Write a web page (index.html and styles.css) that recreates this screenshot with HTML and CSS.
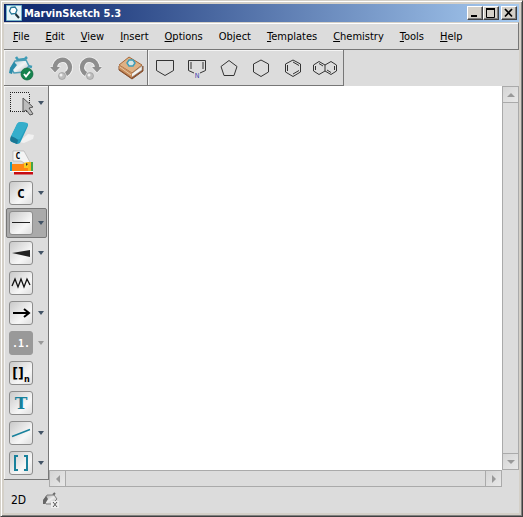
FILE: index.html
```html
<!DOCTYPE html>
<html lang="en">
<head>
    <meta charset="UTF-8">
    <meta name="viewport" content="width=device-width, initial-scale=1.0">
    <title>MarvinSketch 5.3</title>
    <link rel="stylesheet" href="styles.css">
</head>
<body>
    <div class="window">
        <header class="titlebar">
            <svg class="app-icon" width="16" height="16" viewBox="0 0 16 16">
                <rect width="16" height="16" fill="#e8f4f8"/>
                <path d="M0 0H16V16H0Z" fill="none" stroke="#4a9ab8" stroke-width="1.5"/>
                <path d="M5 2.5L9 2L11 5L9.500 8.500L5.500 9L3.500 6Z" fill="#fff" stroke="#287898" stroke-width="1.3"/>
                <path d="M9.500 9L13 13" stroke="#20333d" stroke-width="2"/>
            </svg>
            <h1>MarvinSketch 5.3</h1>
            <div class="window-buttons">
                <button aria-label="Minimize"><svg width="14" height="12"><path d="M3 9H9" stroke="#000" stroke-width="2"/></svg></button>
                <button aria-label="Maximize"><svg width="14" height="12"><path d="M2.500 2V10.500H10.500V2" fill="none" stroke="#000"/><path d="M2 2H11" stroke="#000" stroke-width="2"/></svg></button>
                <button class="close" aria-label="Close"><svg width="14" height="12"><path d="M3 2L10 9.500M10 2L3 9.500" stroke="#000" stroke-width="1.700"/></svg></button>
            </div>
        </header>

        <nav class="menubar">
            <button><u>F</u>ile</button>
            <button><u>E</u>dit</button>
            <button><u>V</u>iew</button>
            <button><u>I</u>nsert</button>
            <button><u>O</u>ptions</button>
            <button>Object</button>
            <button><u>T</u>emplates</button>
            <button><u>C</u>hemistry</button>
            <button><u>T</u>ools</button>
            <button><u>H</u>elp</button>
        </nav>

        <div class="toolbars">
            <div class="toolbar general">
                <button aria-label="Check structure">
                    <svg width="26" height="26" viewBox="0 0 26 26">
                        <defs>
                            <linearGradient id="steel" x2="1" y2="1">
                                <stop stop-color="#a9c4cd"/>
                                <stop offset=".5" stop-color="#f2f4f5"/>
                                <stop offset="1" stop-color="#a3b0b6"/>
                            </linearGradient>
                        </defs>
                        <path d="M8 2L10 5L17 4L19 2M20 11L24 12" fill="none" stroke="#3f9cb6" stroke-width="2.500"/>
                        <path d="M7 6L18 5L21 11L16 17L6 18L3 13Z" fill="url(#steel)" stroke="#4f9fb7" stroke-width="1.500"/>
                        <path d="M6 7L9 10L5 15L4 19L1 18L2 13Z" fill="#2b8dab"/>
                        <circle cx="19" cy="19" r="6" fill="#16834e" stroke="#08643a" stroke-width=".7"/>
                        <path d="M16 19L18 21.500L22 16.500" fill="none" stroke="#fff" stroke-width="2"/>
                    </svg>
                </button>
                <button class="undo" aria-label="Undo">
                    <svg width="24" height="26" viewBox="0 0 24 26">
                        <g id="turn" fill="none">
                            <path d="M5 12A7.500 7.500 0 1 1 16 19" stroke="#f4f4f4" stroke-width="6"/>
                            <path d="M-1 11.500H11L5 18.500Z" fill="#f4f4f4"/>
                            <path d="M5 13A7.500 7.500 0 1 1 16 19" stroke="#8e8e8e" stroke-width="4.500"/>
                            <path d="M0 12H10L5 17.500Z" fill="#8e8e8e"/>
                        </g>
                        <circle cx="12" cy="21" r="3.500" fill="#bdbdbd" stroke="#929292" stroke-width=".6"/>
                        <circle cx="11" cy="20" r="1.500" fill="#efefef"/>
                    </svg>
                </button>
                <button class="redo" aria-label="Redo">
                    <svg width="24" height="26" viewBox="0 0 24 26">
                        <use href="#turn" transform="matrix(-1 0 0 1 24 0)"/>
                        <circle cx="12" cy="21" r="3.500" fill="#bdbdbd" stroke="#929292" stroke-width=".6"/>
                        <circle cx="11" cy="20" r="1.500" fill="#efefef"/>
                    </svg>
                </button>
                <button class="library" aria-label="Template library">
                    <svg width="26" height="26" viewBox="0 0 26 26">
                        <path d="M1 11L13 20L25 11V16L14 24L1 15Z" fill="#8f4e28" stroke="#85502e"/>
                        <path d="M13 19L24 11V15L14 22Z" fill="#f4f2ee" stroke="#9a9a9a" stroke-width=".6"/>
                        <path d="M11 2L24 10L14 18L1 10Z" fill="#dfb184" stroke="#a5683a"/>
                        <path d="M1 10L14 18V23L1 14Z" fill="#c98f5e"/>
                        <path d="M2 12L13 20" stroke="#e8c8a4"/>
                        <path d="M11 5L15 5L17 8L15 11L11 11L9 8Z" fill="#d8e6e4" stroke="#3f9db8" stroke-width="1.500"/>
                    </svg>
                </button>
            </div>
            <div class="toolbar templates">
                <button aria-label="Cyclopentane, point down">
                    <svg width="26" height="26"><path class="bond" d="M4.500 5.500H21.500V15.500L13 20.500L4.500 15.500Z"/></svg>
                </button>
                <button aria-label="Pyrrole">
                    <svg width="26" height="26">
                        <path class="bond" d="M10 18L4.500 15.500V5.500H21.500V15.500L16 18M7 7V14M19 7V14"/>
                        <text x="13" y="23" class="nitrogen">N</text>
                    </svg>
                </button>
                <button aria-label="Cyclopentane">
                    <svg width="26" height="26"><path class="bond" d="M13 5.500L21 11.500L18 20.500H8L5 11.500Z"/></svg>
                </button>
                <button aria-label="Cyclohexane">
                    <svg width="26" height="26"><path class="bond" d="M13 5L20.500 9V17L13 21.500L5.500 17V9Z"/></svg>
                </button>
                <button aria-label="Benzene">
                    <svg width="26" height="26"><path class="bond" d="M13 5L20.500 9V17L13 21.500L5.500 17V9ZM7.500 10V16M13 7L19 10.500M13 19L19 15.500"/></svg>
                </button>
                <button aria-label="Naphthalene">
                    <svg width="26" height="26"><path class="bond" d="M7 6.500L13 10V16L7 19.500L1.500 16V10ZM13 10L19 6.500L24.500 10V16L19 19.500L13 16M3.500 11V15M7 8.500L11 11M22.500 11V15M19 17.500L15 15"/></svg>
                </button>
            </div>
        </div>

        <main class="workspace">
            <aside class="tools">
                <button class="tool menu" aria-label="Select">
                    <svg width="26" height="26" viewBox="0 0 26 26">
                        <path d="M1.500 2.500H20.500V21.500H1.500Z" fill="#e2e2e2"/>
                        <path d="M1 2.500H21M1 21.500H21M1.500 4V21M20.500 4V21" stroke="#222" stroke-dasharray="1 1"/>
                        <path d="M14 8L24 17L20 18L24 24L21 25L17 20L14 22Z" fill="#bcbcbc" stroke="#555"/>
                    </svg>
                </button>
                <button class="tool" aria-label="Erase">
                    <svg width="26" height="26" viewBox="0 0 26 26">
                        <path d="M10 22L19 14L25 15L24 19L15 23Z" fill="#f1f1f1"/>
                        <path d="M8 4Q9 2 12 2L18 3Q20 4 18 8L12 21Q11 24 8 24L3 22Q0 21 2 17Z" fill="#239dbd"/>
                        <path d="M8 4Q9 2 12 2L18 3Q19 4 18 6L11 19Q9 20 6 18L2 16Z" fill="#35aecb"/>
                        <path d="M2 16Q7 18 9 20L8 24L3 22Q0 21 2 16Z" fill="#1b7794"/>
                    </svg>
                </button>
                <button class="tool" aria-label="Clean structure">
                    <svg width="26" height="26" viewBox="0 0 26 26">
                        <path d="M4 1H15L21 12L17 14L12 11H4Z" fill="#f4f4f4" stroke="#aaa" stroke-width=".6"/>
                        <text x="9" y="9" class="card-letter">C</text>
                        <path d="M1 12H3V21H1Z" fill="#159dc4"/>
                        <path d="M3 14H13L19 12V21H3Z" fill="#ff8614"/>
                        <path d="M15 13L19 12V18H15Z" fill="#f8ca20"/>
                        <path d="M19 12H22V21H19Z" fill="#ffb61c"/>
                        <path d="M22 12H24V21H22Z" fill="#43a548"/>
                        <path d="M17 13L19 14L17 16Z" fill="#333"/>
                        <path d="M1 21H24V22H1Z" fill="#fff"/>
                        <path d="M5 22H24V24.500H5Z" fill="#c70b12"/>
                    </svg>
                </button>
                <button class="tool menu" aria-label="Carbon atom"><span class="key atom">C</span></button>
                <button class="tool menu selected" aria-label="Single bond">
                    <span class="key"><svg width="22" height="22"><path d="M2 10.500H20" stroke="#222"/></svg></span>
                </button>
                <button class="tool menu" aria-label="Wedge bond">
                    <span class="key"><svg width="22" height="22"><path d="M2 11L20 8V15Z" fill="#222"/></svg></span>
                </button>
                <button class="tool" aria-label="Chain">
                    <span class="key"><svg width="22" height="22"><path d="M2 14L5 7L8 15L11 7L14 15L17 7L20 13" fill="none" stroke="#111" stroke-width="1.300"/></svg></span>
                </button>
                <button class="tool menu" aria-label="Reaction arrow">
                    <span class="key"><svg width="22" height="22"><path d="M3 11H19M14 7L19 11L14 15" fill="none" stroke="#000" stroke-width="2"/></svg></span>
                </button>
                <button class="tool menu" aria-label="Atom map" disabled><span class="key map">.1.</span></button>
                <button class="tool" aria-label="Repeating group"><span class="key group">[]<sub>n</sub></span></button>
                <button class="tool" aria-label="Text"><span class="key text">T</span></button>
                <button class="tool menu" aria-label="Line">
                    <span class="key"><svg width="22" height="22"><path d="M2 14.500L20 7.500" stroke="#18819c" stroke-width="1.500"/></svg></span>
                </button>
                <button class="tool menu" aria-label="Brackets">
                    <span class="key"><svg width="22" height="22"><path d="M8 4H5V18H8M14 4H17V18H14" fill="none" stroke="#18819c" stroke-width="2"/></svg></span>
                </button>
            </aside>
            <div class="canvas"></div>
            <div class="scrollbar vertical">
                <button aria-label="Scroll up"><svg width="8" height="4"><path d="M4 0L8 4H0Z"/></svg></button>
                <button aria-label="Scroll down"><svg width="8" height="4"><path d="M0 0H8L4 4Z"/></svg></button>
            </div>
            <div class="scrollbar horizontal">
                <button aria-label="Scroll left"><svg width="4" height="8"><path d="M4 0V8L0 4Z"/></svg></button>
                <button aria-label="Scroll right"><svg width="4" height="8"><path d="M0 0L4 4L0 8Z"/></svg></button>
            </div>
        </main>

        <footer class="statusbar">
            <span>2D</span>
            <svg width="18" height="18" viewBox="0 0 18 18">
                <defs>
                    <linearGradient id="dull" x2="1" y2="1">
                        <stop stop-color="#999"/>
                        <stop offset=".5" stop-color="#eee"/>
                        <stop offset="1" stop-color="#aaa"/>
                    </linearGradient>
                </defs>
                <path d="M11 4L13 2" stroke="#666" stroke-width="2"/>
                <path d="M5 4H12L15 8L10 13H4L2 9Z" fill="url(#dull)" stroke="#808080"/>
                <path d="M4 5L6 8L3 13H1V9Z" fill="#666"/>
                <path d="M9 10H17V17H9Z" fill="#eee"/>
                <path d="M11 11L15 16M15 11L11 16" stroke="#555"/>
            </svg>
        </footer>
    </div>
</body>
</html>
```

FILE: styles.css
```css
* {
    margin: 0;
    padding: 0;
    box-sizing: border-box;
}

body {
    font-family: "DejaVu Sans Condensed", Tahoma, sans-serif;
    font-size: 11px;
    color: #000;
}

button {
    font: inherit;
    color: inherit;
    background: none;
    border: none;
}

svg {
    display: block;
}

.window {
    display: flex;
    flex-direction: column;
    min-height: 100vh;
    padding: 3px;
    background: #dcdcdc;
    border: 1px solid;
    border-color: #d4d0c8 #404040 #404040 #d4d0c8;
    box-shadow: inset 1px 1px #fff, inset -1px -1px #808080, inset 3px 3px #d4d0c8, inset -3px -3px #d4d0c8;
}

/* Title bar */
.titlebar {
    display: flex;
    align-items: center;
    gap: 2px;
    height: 18px;
    padding: 0 2px;
    color: #fff;
    background: linear-gradient(90deg, #0a246a, #a6caf0);
}

.titlebar h1 {
    flex: 1;
    font-size: 11px;
    font-weight: bold;
}

.window-buttons {
    display: flex;
}

.window-buttons button {
    width: 16px;
    height: 14px;
    background: #d4d0c8;
    border: 1px solid;
    border-color: #fff #404040 #404040 #fff;
    box-shadow: inset -1px -1px #808080;
}

.window-buttons .close {
    margin-left: 2px;
}

/* Menu bar */
.menubar {
    display: flex;
    align-items: center;
    gap: 16px;
    height: 28px;
    padding: 0 9px;
    border-top: 1px solid #d4d0c8;
    border-right: 1px solid #777;
    border-bottom: 1px solid #777;
    box-shadow: inset 0 1px #fff;
}

/* Toolbars */
.toolbars {
    display: flex;
    height: 36px;
}

.toolbar {
    display: flex;
    align-items: center;
    border-right: 1px solid #777;
    border-bottom: 1px solid #777;
    box-shadow: inset 1px 1px #f4f4f4;
}

.general {
    padding: 0 3px 0 4px;
}

.general .undo {
    margin-left: 16px;
}

.general .redo {
    margin-left: 4px;
}

.general .library {
    margin-left: 16px;
}

.templates {
    gap: 6px;
    padding: 0 5px 0 4px;
}

.bond {
    fill: none;
    stroke: #333;
}

.nitrogen {
    fill: #4444b0;
    font-size: 7px;
    text-anchor: middle;
}

/* Workspace */
.workspace {
    flex: 1;
    display: grid;
    grid-template-columns: 45px 1fr 17px;
    grid-template-rows: 1fr 17px;
}

.tools {
    grid-row: 1 / 3;
    align-self: start;
    display: flex;
    flex-direction: column;
    padding: 2px 1px 1px 2px;
    border-right: 1px solid #777;
    border-bottom: 1px solid #777;
    box-shadow: inset 1px 1px #f4f4f4;
}

.tool {
    display: flex;
    align-items: center;
    gap: 5px;
    height: 30px;
    padding: 0 2px;
    border: 1px solid transparent;
    border-radius: 2px;
}

.tool.menu::after {
    content: "";
    border: 3px solid transparent;
    border-top: 4px solid #435466;
    border-bottom: none;
}

.tool.menu > svg,
.tool > .key {
    flex: none;
}

.tool.menu > svg {
    margin-right: -2px;
}

.tool.menu:disabled::after {
    border-top-color: #999;
}

.tool.selected {
    background: #aaa;
    border-color: #777;
}

.key {
    display: flex;
    align-items: center;
    justify-content: center;
    width: 24px;
    height: 24px;
    border: 1px solid #8c8c8c;
    border-radius: 3px;
    background: linear-gradient(135deg, #c9c9c9, #f7f7f7 65%, #dedede);
}

.atom {
    font: bold 13px "DejaVu Sans Mono", monospace;
}

.map {
    color: #fff;
    background: #999;
    border-color: #999;
    font: bold 10px "DejaVu Sans Mono", monospace;
}

.group {
    font-size: 14px;
    font-weight: bold;
}

.group sub {
    align-self: flex-end;
    font-size: 9px;
}

.text {
    color: #18819c;
    font: bold 17px "DejaVu Serif", serif;
}

.card-letter {
    font: bold 8px "DejaVu Sans Mono", monospace;
    text-anchor: middle;
}

.canvas {
    background: #fff;
}

.scrollbar {
    display: flex;
    justify-content: space-between;
    border: 1px solid #aaa;
}

.vertical {
    flex-direction: column;
}

.horizontal {
    grid-column: 2;
}

.scrollbar button {
    display: flex;
    align-items: center;
    justify-content: center;
    width: 15px;
    height: 15px;
    background: linear-gradient(135deg, #d5d5d5, #e8e8e8);
    box-shadow: 0 0 0 1px #aaa;
}

.scrollbar path {
    fill: #999;
}

/* Status bar */
.statusbar {
    display: flex;
    align-items: center;
    gap: 16px;
    height: 26px;
    padding: 0 7px;
    font-size: 12px;
}
```
